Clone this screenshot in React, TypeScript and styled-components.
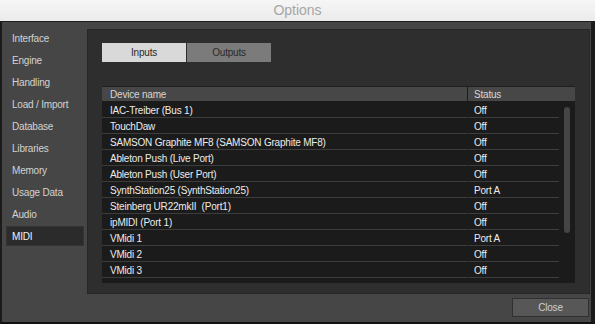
import styled, { createGlobalStyle } from "styled-components";

const sections = [
  "Interface",
  "Engine",
  "Handling",
  "Load / Import",
  "Database",
  "Libraries",
  "Memory",
  "Usage Data",
  "Audio",
  "MIDI",
];

const devices = [
  { name: "IAC-Treiber (Bus 1)", status: "Off" },
  { name: "TouchDaw", status: "Off" },
  { name: "SAMSON Graphite MF8 (SAMSON Graphite MF8)", status: "Off" },
  { name: "Ableton Push (Live Port)", status: "Off" },
  { name: "Ableton Push (User Port)", status: "Off" },
  { name: "SynthStation25 (SynthStation25)", status: "Port A" },
  { name: "Steinberg UR22mkII  (Port1)", status: "Off" },
  { name: "ipMIDI (Port 1)", status: "Off" },
  { name: "VMidi 1", status: "Port A" },
  { name: "VMidi 2", status: "Off" },
  { name: "VMidi 3", status: "Off" },
];

export default function App() {
  return (
    <>
      <GlobalStyle />
      <Window>
        <TitleBar>Options</TitleBar>
        <Body>
          <Main>
            <Sidebar>
              {sections.map((s) => (
                <NavItem key={s} $active={s === "MIDI"}>
                  {s}
                </NavItem>
              ))}
            </Sidebar>
            <Panel>
              <Tabs>
                <Tab $active>Inputs</Tab>
                <Tab>Outputs</Tab>
              </Tabs>
              <Table>
                <HeaderRow>
                  <HeadCell $w={365}>Device name</HeadCell>
                  <HeadCell>Status</HeadCell>
                </HeaderRow>
                <TableBody>
                  <Rows>
                    {devices.map((d) => (
                      <Row key={d.name}>
                        <NameCell>{d.name}</NameCell>
                        <StatusCell>{d.status}</StatusCell>
                      </Row>
                    ))}
                  </Rows>
                  <Gutter>
                    <Thumb />
                  </Gutter>
                </TableBody>
              </Table>
            </Panel>
          </Main>
          <Footer>
            <CloseButton>Close</CloseButton>
          </Footer>
        </Body>
      </Window>
    </>
  );
}

const GlobalStyle = createGlobalStyle`
  *, *::before, *::after {
    box-sizing: border-box;
  }
  body {
    margin: 0;
    background: #ffffff;
    font-family: "Liberation Sans", Arial, sans-serif;
  }
`;

const uiText = `
  font-family: "Liberation Sans", Arial, sans-serif;
  font-size: 10px;
  letter-spacing: -0.2px;
`;

const Window = styled.div`
  width: 595px;
  height: 324px;
  display: flex;
  flex-direction: column;
  overflow: hidden;
`;

const TitleBar = styled.div`
  height: 22px;
  flex: none;
  display: flex;
  align-items: center;
  justify-content: center;
  padding-bottom: 1px;
  background: linear-gradient(#f6f6f6, #ebebeb);
  border-bottom: 1px solid #1e1e1e;
  font-size: 14px;
  color: #a6a6a6;
`;

const Body = styled.div`
  flex: 1;
  display: flex;
  flex-direction: column;
  background: #464646;
  border-left: 2px solid #1b1b1b;
  border-right: 4px solid #1b1b1b;
  border-bottom: 2px solid #111111;
  min-height: 0;
`;

const Main = styled.div`
  display: flex;
  height: 272px;
  padding-top: 7px;
  padding-right: 1px;
`;

const Sidebar = styled.nav`
  width: 85px;
  flex: none;
  display: flex;
  flex-direction: column;
  gap: 2px;
  margin-top: -1px;
`;

const NavItem = styled.div<{ $active?: boolean }>`
  height: 20px;
  margin-left: 4px;
  margin-right: 3px;
  padding-left: 5px;
  display: flex;
  align-items: center;
  ${uiText}
  color: ${(p) => (p.$active ? "#f2f2f2" : "#d2d2d2")};
  background: ${(p) => (p.$active ? "#2b2b2b" : "transparent")};
  border: 1px solid ${(p) => (p.$active ? "#333333" : "transparent")};
`;

const Panel = styled.section`
  flex: 1;
  display: flex;
  flex-direction: column;
  background: #2e2e2e;
  border: 1px solid #262626;
  padding: 13px 14px 10px 14px;
`;

const Tabs = styled.div`
  display: flex;
  gap: 1px;
  margin-bottom: 24px;
`;

const Tab = styled.div<{ $active?: boolean }>`
  width: 84px;
  height: 19px;
  display: flex;
  align-items: center;
  justify-content: center;
  ${uiText}
  color: #2a2a2a;
  background: ${(p) => (p.$active ? "#d9d9d9" : "#7b7b7b")};
`;

const Table = styled.div`
  flex: 1;
  display: flex;
  flex-direction: column;
  background: #1b1b1b;
  border-top: 1px solid #1e1e1e;
  min-height: 0;
`;

const HeaderRow = styled.div`
  display: flex;
  height: 14px;
  flex: none;
  background: #474747;
`;

const HeadCell = styled.div<{ $w?: number }>`
  ${(p) => (p.$w ? `width: ${p.$w}px;` : "flex: 1;")}
  padding-left: 8px;
  display: flex;
  align-items: center;
  ${uiText}
  color: #d6d6d6;
  & + & {
    border-left: 1px solid #1e1e1e;
    padding-left: 6px;
  }
`;

const TableBody = styled.div`
  flex: 1;
  display: flex;
  overflow: hidden;
  min-height: 0;
  padding-top: 1px;
`;

const Rows = styled.div`
  width: 457px;
  flex: none;
  display: flex;
  flex-direction: column;
`;

const Row = styled.div`
  display: flex;
  height: 16px;
  flex: none;
  gap: 1px;
  ${uiText}
  color: #ececec;
`;

const NameCell = styled.div`
  width: 365px;
  flex: none;
  padding: 1px 0 0 8px;
  display: flex;
  align-items: center;
  white-space: pre;
  border-bottom: 1px solid #3d3d3d;
`;

const StatusCell = styled.div`
  flex: 1;
  padding: 1px 0 0 6px;
  display: flex;
  align-items: center;
  border-bottom: 1px solid #3d3d3d;
`;

const Gutter = styled.div`
  flex: 1;
  padding: 5px 3px 0 5px;
`;

const Thumb = styled.div`
  width: 6px;
  height: 126px;
  border-radius: 3px;
  background: #454545;
`;

const Footer = styled.div`
  flex: 1;
  display: flex;
  justify-content: flex-end;
  align-items: flex-start;
  padding: 4px 2px 0 0;
`;

const CloseButton = styled.button`
  width: 77px;
  height: 19px;
  padding: 0;
  background: #575757;
  border: 1px solid #303030;
  ${uiText}
  color: #cfcfcf;
`;
